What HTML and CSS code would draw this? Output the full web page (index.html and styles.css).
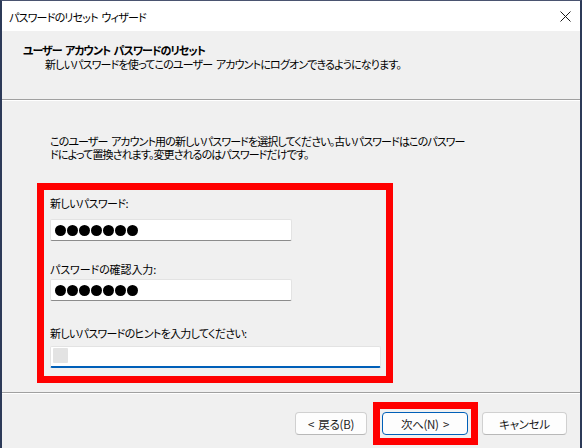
FILE: index.html
```html
<!DOCTYPE html>
<html lang="ja">
<head>
<meta charset="utf-8">
<title>パスワードのリセット ウィザード</title>
<link rel="stylesheet" href="styles.css">
</head>
<body>
<div class="window">
  <div class="titlebar">
    <span class="title">パスワードのリセット ウィザード</span>
    <svg class="close" width="11" height="11" viewBox="0 0 11 11"><path d="M0.5 0.5 L10.5 10.5 M10.5 0.5 L0.5 10.5" stroke="#1a1a1a" stroke-width="1" fill="none"/></svg>
  </div>
  <div class="header">
    <div class="h-title">ユーザー アカウント パスワードのリセット</div>
    <div class="h-sub">新しいパスワードを使ってこのユーザー アカウントにログオンできるようになります。</div>
  </div>
  <div class="content">
    <p class="intro">このユーザー アカウント用の新しいパスワードを選択してください。古いパスワードはこのパスワー<br>ドによって置換されます。変更されるのはパスワードだけです。</p>
    <div class="mark fields">
      <div class="label l1">新しいパスワード:</div>
      <div class="field f1"><span class="dot"></span><span class="dot"></span><span class="dot"></span><span class="dot"></span><span class="dot"></span><span class="dot"></span><span class="dot"></span></div>
      <div class="label l2">パスワードの確認入力:</div>
      <div class="field f2"><span class="dot"></span><span class="dot"></span><span class="dot"></span><span class="dot"></span><span class="dot"></span><span class="dot"></span><span class="dot"></span></div>
      <div class="label l3">新しいパスワードのヒントを入力してください:</div>
      <div class="field f3 focused"><span class="ime"></span></div>
    </div>
  </div>
  <div class="footer">
    <button class="btn back">&lt; 戻る(B)</button>
    <span class="mark mark-btn"><button class="btn next">次へ(N) &gt;</button></span>
    <button class="btn cancel">キャンセル</button>
  </div>
</div>
</body>
</html>
```

FILE: styles.css
```css
* { box-sizing: border-box; }
html, body { margin: 0; padding: 0; }
body {
  width: 582px;
  height: 448px;
  overflow: hidden;
  font-family: "Noto Sans CJK JP", "Noto Sans", sans-serif;
  font-size: 11px;
  letter-spacing: -0.6px;
  font-feature-settings: "palt";
  color: #111;
  background: #f0f0f0;
}
.window {
  width: 582px;
  height: 448px;
  display: flex;
  flex-direction: column;
  border-left: 2px solid #2c3a58;
  border-right: 2px solid #2c3a58;
  border-top: 1px solid #4a5470;
  background: #f0f0f0;
}
.titlebar {
  height: 30px;
  flex: none;
  background: #ffffff;
  display: flex;
  align-items: center;
  justify-content: space-between;
  padding: 1px 9px 0 7px;
}
.title { line-height: 16px; color: #000; letter-spacing: -0.8px; word-spacing: 2px; }
.close { display: block; margin-top: -1px; }
.header {
  height: 69px;
  flex: none;
  background: #f0f0f0;
  border-bottom: 1px solid #a0a0a0;
  box-shadow: 0 1px 0 #ffffff;
  padding: 12px 0 0 21px;
  line-height: 14px;
}
.h-title { font-weight: bold; color: #000; letter-spacing: -1px; word-spacing: 2px; }
.h-sub { margin-left: 22px; color: #000; letter-spacing: -0.85px; word-spacing: 2px; }
.content {
  flex: 1;
  padding: 35px 0 0 35px;
}
.intro {
  margin: 0 0 0 13px;
  line-height: 13px;
  white-space: nowrap;
  color: #000;
  letter-spacing: -0.9px;
  word-spacing: 2px;
}
.mark {
  border: 7px solid #ff0000;
}
.fields {
  margin-top: 22px;
  width: 356px;
  padding: 5px 0 8px 6px;
}
.label { line-height: 16px; color: #000; }
.l2 { margin-top: 20px; letter-spacing: -0.1px; }
.l3 { margin-top: 24px; letter-spacing: -0.7px; }
.field {
  height: 22px;
  width: 242px;
  background: #ffffff;
  border: 1px solid #e3e3e3;
  border-bottom-color: #8c8c8c;
  border-radius: 2px;
  display: flex;
  align-items: center;
  gap: 1px;
  padding-left: 4px;
}
.f1 { margin-top: 8px; }
.f2 { margin-top: 2px; }
.f3 {
  margin-top: 5px;
  width: 331px;
  padding-left: 2px;
  align-items: flex-start;
  padding-top: 1px;
}
.focused {
  border-bottom: 2px solid #005fb8;
}
.dot {
  width: 11px;
  height: 11px;
  border-radius: 50%;
  background: #000;
  flex: none;
}
.ime {
  width: 15px;
  height: 15px;
  background: #e3e3e3;
  border-radius: 1px;
}
.footer {
  height: 56px;
  flex: none;
  border-top: 1px solid #a0a0a0;
  box-shadow: inset 0 1px 0 #ffffff;
  display: flex;
  align-items: flex-start;
  justify-content: flex-end;
  padding: 9px 13px 0 0;
}
.btn {
  height: 23px;
  margin: 0;
  padding: 0;
  font-family: inherit;
  font-size: 11.5px;
  letter-spacing: -0.3px;
  word-spacing: 2px;
  font-feature-settings: "palt";
  color: #1a1a1a;
  background: #fdfdfd;
  border: 1px solid #d0d0d0;
  border-bottom-color: #b8b8b8;
  border-radius: 4px;
  line-height: 20px;
}
.back { width: 72px; margin-top: 10px; margin-right: 6px; }
.cancel { width: 85px; margin-top: 10px; margin-left: 4px; }
.mark-btn {
  display: block;
  padding: 3px 3px 3px 2px;
}
.next {
  display: block;
  width: 86px;
  border: 1px solid #005fb8;
}
```
